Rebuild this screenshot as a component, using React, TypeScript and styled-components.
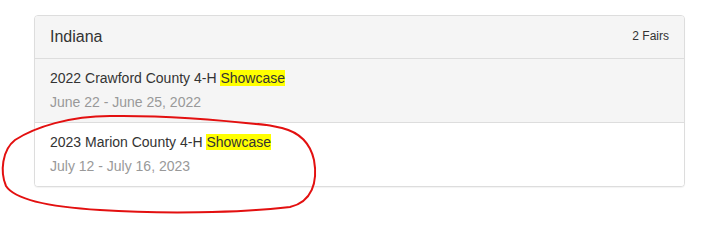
import React from "react";
import styled, { createGlobalStyle } from "styled-components";

const GlobalStyle = createGlobalStyle`
  html, body {
    margin: 0;
    padding: 0;
    background: #fff;
  }
  body {
    font-family: "Liberation Sans", Arial, sans-serif;
    font-size: 14px;
    line-height: 19px;
    color: #333;
  }
`;

const Page = styled.div`
  position: relative;
  padding: 15px 20px 0 34px;
  height: 215px;
  box-sizing: border-box;
  overflow: hidden;
`;

const Panel = styled.div`
  border: 1px solid #ddd;
  border-radius: 4px;
  background: #fff;
  box-shadow: 0 1px 1px rgba(0, 0, 0, 0.05);
  overflow: hidden;
`;

const PanelHeading = styled.div`
  display: flex;
  justify-content: space-between;
  align-items: flex-start;
  padding: 10px 15px;
  background: #f5f5f5;
  border-bottom: 1px solid #ddd;
`;

const PanelTitle = styled.h3`
  margin: 0;
  font-size: 16px;
  font-weight: normal;
  line-height: 22px;
  color: #333;
`;

const FairCount = styled.span`
  font-size: 12px;
  line-height: 16px;
  margin-top: 2px;
  color: #333;
`;

const ListGroup = styled.div`
  display: flex;
  flex-direction: column;
`;

const FairItem = styled.div<{ $hover?: boolean }>`
  padding: 10px 15px;
  background: ${(p) => (p.$hover ? "#f5f5f5" : "#fff")};
  & + & {
    border-top: 1px solid #ddd;
  }
`;

const FairName = styled.div`
  margin-bottom: 5px;
  color: #333;
`;

const Highlight = styled.span`
  background: #ffff00;
`;

const FairDates = styled.div`
  color: #999;
`;

const Annotation = styled.svg`
  position: absolute;
  left: 0;
  top: 0;
  pointer-events: none;
`;

const fairs = [
  { name: "2022 Crawford County 4-H", dates: "June 22 - June 25, 2022", hover: true },
  { name: "2023 Marion County 4-H", dates: "July 12 - July 16, 2023", hover: false },
];

const App = () => {
  return (
    <Page>
      <GlobalStyle />
      <Panel>
        <PanelHeading>
          <PanelTitle>Indiana</PanelTitle>
          <FairCount>{fairs.length} Fairs</FairCount>
        </PanelHeading>
        <ListGroup>
          {fairs.map((fair) => (
            <FairItem key={fair.name} $hover={fair.hover}>
              <FairName>
                {fair.name} <Highlight>Showcase</Highlight>
              </FairName>
              <FairDates>{fair.dates}</FairDates>
            </FairItem>
          ))}
        </ListGroup>
      </Panel>
      <Annotation width="705" height="215" viewBox="0 0 705 215">
        <path
          d="M 266 125 C 230 121, 170 115, 110 116 C 70 116, 35 127, 15 140 C 2 150, 0 172, 6 186 C 15 200, 50 207, 100 210 C 160 214, 240 213, 290 207 C 312 202, 318 182, 314 160 C 310 142, 298 132, 282 128 C 272 126, 264 124, 258 124"
          fill="none"
          stroke="#e31010"
          strokeWidth="2"
          strokeLinecap="round"
        />
      </Annotation>
    </Page>
  );
};

export default App;
